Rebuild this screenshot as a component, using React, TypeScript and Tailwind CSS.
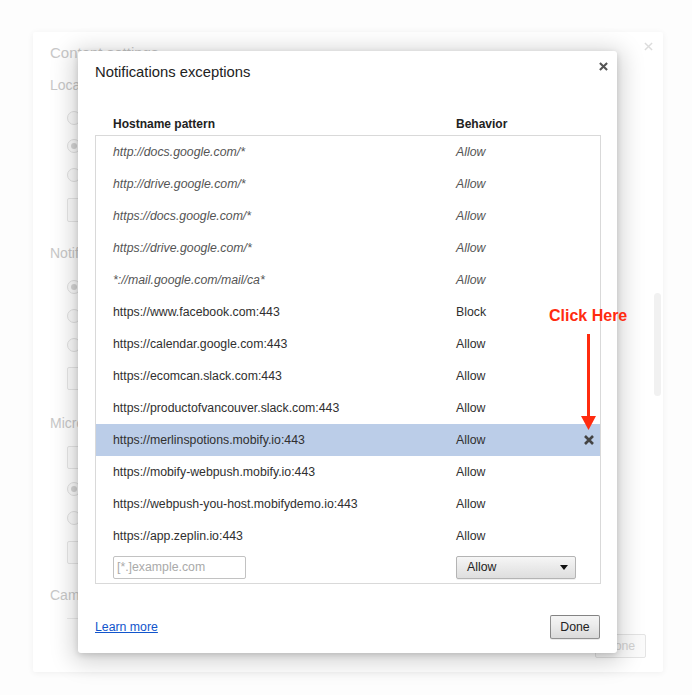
import React from "react";

const rows: { host: string; behavior: string; italic?: boolean; selected?: boolean }[] = [
  { host: "http://docs.google.com/*", behavior: "Allow", italic: true },
  { host: "http://drive.google.com/*", behavior: "Allow", italic: true },
  { host: "https://docs.google.com/*", behavior: "Allow", italic: true },
  { host: "https://drive.google.com/*", behavior: "Allow", italic: true },
  { host: "*://mail.google.com/mail/ca*", behavior: "Allow", italic: true },
  { host: "https://www.facebook.com:443", behavior: "Block" },
  { host: "https://calendar.google.com:443", behavior: "Allow" },
  { host: "https://ecomcan.slack.com:443", behavior: "Allow" },
  { host: "https://productofvancouver.slack.com:443", behavior: "Allow" },
  { host: "https://merlinspotions.mobify.io:443", behavior: "Allow", selected: true },
  { host: "https://mobify-webpush.mobify.io:443", behavior: "Allow" },
  { host: "https://webpush-you-host.mobifydemo.io:443", behavior: "Allow" },
  { host: "https://app.zeplin.io:443", behavior: "Allow" },
];

function Radio({ checked, className }: { checked?: boolean; className: string }) {
  return (
    <div
      className={
        "w-[14px] h-[14px] rounded-full border border-[#e2e2e2] bg-[#fbfbfb] flex items-center justify-center " +
        className
      }
    >
      {checked ? <div className="w-[6px] h-[6px] rounded-full bg-[#d6d6d6]" /> : null}
    </div>
  );
}

function Box({ className }: { className: string }) {
  return <div className={"w-[120px] rounded-[2px] border border-[#e6e6e6] bg-[#fcfcfc] " + className} />;
}

function XIcon({ size, stroke, color }: { size: number; stroke: number; color: string }) {
  return (
    <svg width={size} height={size} viewBox="0 0 10 10">
      <path d="M1 1 L9 9 M9 1 L1 9" stroke={color} strokeWidth={stroke} strokeLinecap="butt" fill="none" />
    </svg>
  );
}

export default function App() {
  return (
    <div
      className="relative w-[692px] h-[695px] overflow-hidden bg-[#fdfdfd]"
      style={{ fontFamily: '"Liberation Sans", Arial, sans-serif' }}
    >
      {/* Background settings card (faded) */}
      <div className="relative ml-[33px] mt-[32px] w-[630px] h-[640px] bg-white rounded-[2px] shadow-[0_1px_6px_rgba(0,0,0,0.06)] pl-[17px] pt-[11px] flex flex-col text-[#c8c8c8]">
        <div className="h-[20px] leading-[20px] text-[15px]">Content settings</div>
        <div className="mt-[12px] h-[20px] leading-[20px] text-[14px]">Location</div>
        <div className="pl-[17px] flex flex-col">
          <Radio className="mt-[16px]" />
          <Radio className="mt-[14px]" checked />
          <Radio className="mt-[15px]" />
          <Box className="mt-[16px] h-[24px]" />
        </div>
        <div className="mt-[21px] h-[20px] leading-[20px] text-[14px]">Notifications</div>
        <div className="pl-[17px] flex flex-col">
          <Radio className="mt-[17px]" checked />
          <Radio className="mt-[15px]" />
          <Radio className="mt-[15px]" />
          <Box className="mt-[15px] h-[23px]" />
        </div>
        <div className="mt-[23px] h-[20px] leading-[20px] text-[14px]">Microphone</div>
        <div className="pl-[17px] flex flex-col">
          <Box className="mt-[13px] h-[23px]" />
          <Radio className="mt-[13px]" checked />
          <Radio className="mt-[15px]" />
          <Box className="mt-[16px] h-[23px]" />
        </div>
        <div className="mt-[21px] h-[20px] leading-[20px] text-[14px]">Camera</div>
        <div className="pl-[17px] flex flex-col">
          <div className="mt-[13px] w-[120px] h-[1px] bg-[#ececec]" />
        </div>

        {/* faded close */}
        <div className="absolute right-[10px] top-[10px]">
          <XIcon size={9} stroke={1.6} color="#dcdcdc" />
        </div>
        {/* faded scrollbar */}
        <div className="absolute left-[621px] top-[261px] w-[7px] h-[103px] rounded-[4px] bg-[#f1f1f1]" />
        {/* faded done button */}
        <div className="absolute left-[562px] top-[602px] w-[51px] h-[24px] rounded-[2px] border border-[#e4e4e4] bg-[#fbfbfb] text-[12.3px] text-[#d2d2d2] flex items-center justify-center">
          Done
        </div>
      </div>

      {/* Dialog */}
      <div className="absolute left-[78px] top-[51px] w-[539px] h-[602px] bg-white rounded-[3px] shadow-[0_4px_23px_5px_rgba(0,0,0,0.18),0_2px_6px_rgba(0,0,0,0.15)] flex flex-col px-[17px] pt-[11px] text-[#333]">
        <div className="h-[20px] leading-[20px] text-[14.8px] text-[#222]">Notifications exceptions</div>
        <div className="absolute right-[9px] top-[11px]">
          <XIcon size={9} stroke={2.3} color="#555" />
        </div>

        {/* header */}
        <div className="mt-[34px] h-[16px] leading-[16px] text-[12px] font-bold text-[#222] flex pl-[18px]">
          <div className="w-[343px]">Hostname pattern</div>
          <div>Behavior</div>
        </div>

        {/* list */}
        <div className="mt-[3px] w-[506px] border border-[#d9d9d9] flex flex-col">
          {rows.map((r) => (
            <div
              key={r.host}
              className={
                "h-[32px] flex items-center pl-[17px] text-[12.3px] " +
                (r.selected ? "bg-[#bbcde8] " : "") +
                (r.italic ? "italic text-[#555]" : "text-[#303030]")
              }
            >
              <div className="w-[343px] whitespace-nowrap">{r.host}</div>
              <div className="flex-1">{r.behavior}</div>
              {r.selected ? (
                <div className="mr-[6px] flex items-center">
                  <XIcon size={10} stroke={2.6} color="#444" />
                </div>
              ) : null}
            </div>
          ))}
          <div className="h-[31px] flex items-center pl-[17px]">
            <div className="w-[343px]">
              <div className="w-[133px] h-[23px] rounded-[2px] border border-[#c2c2c2] bg-white flex items-center pl-[3px] text-[12.3px] text-[#aaa]">
                [*.]example.com
              </div>
            </div>
            <div className="w-[120px] h-[23px] rounded-[2px] border border-[#b4b4b4] bg-[linear-gradient(#f6f6f6,#ececec_40%,#dedede)] shadow-[0_1px_0_rgba(0,0,0,0.06)] flex items-center pl-[10px] pr-[7px] text-[12.3px] text-[#222]">
              <span className="flex-1">Allow</span>
              <svg width="8" height="5" viewBox="0 0 8 5">
                <path d="M0 0 L8 0 L4 5 Z" fill="#111" />
              </svg>
            </div>
          </div>
        </div>

        {/* footer */}
        <div className="mt-[31px] flex items-center justify-between">
          <a className="text-[12.3px] text-[#15c] underline leading-[16px]" href="#">
            Learn more
          </a>
          <div className="w-[50px] h-[24px] rounded-[2px] border border-[rgba(0,0,0,0.4)] bg-[linear-gradient(#f4f4f4,#ededed_38%,#dadada)] shadow-[0_1px_0_rgba(0,0,0,0.08)] flex items-center justify-center text-[12.3px] text-[#222]">
            Done
          </div>
        </div>
      </div>

      {/* Annotation */}
      <div className="absolute left-[549px] top-[306px] text-[16px] font-bold text-[#ff2b0f] leading-[20px] whitespace-nowrap">
        Click Here
      </div>
      <svg className="absolute left-[580px] top-[334px]" width="17" height="97" viewBox="0 0 17 97">
        <rect x="7" y="0" width="3" height="84" fill="#ff2b0f" />
        <path d="M1 82 L16 82 L8.5 96 Z" fill="#ff2b0f" />
      </svg>
    </div>
  );
}
